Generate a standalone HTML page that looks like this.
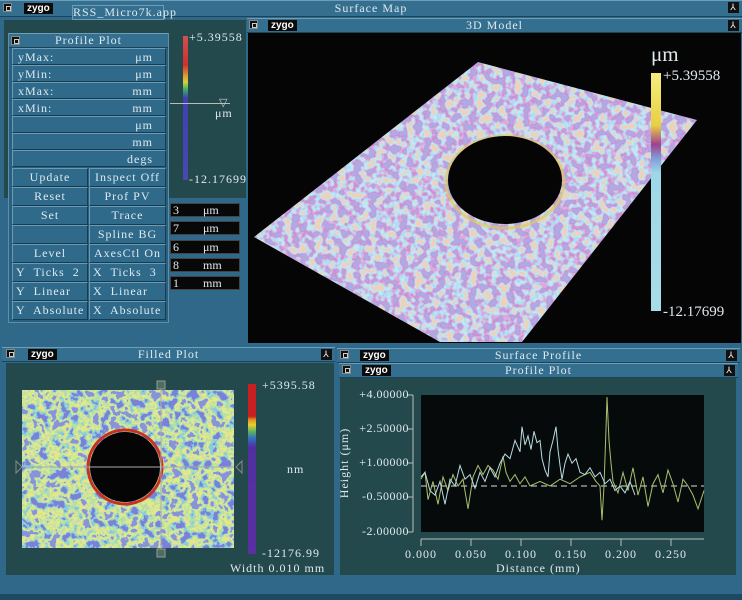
<!DOCTYPE html>
<html><head><meta charset="utf-8"><style>
*{margin:0;padding:0;box-sizing:border-box}
body{width:742px;height:600px;overflow:hidden;background:#2f6888;font-family:"Liberation Serif",serif;color:#dfe9ee;position:relative}
.a{position:absolute}
.tb{position:absolute;background:#346f90;border-top:1px solid #6b9fbb;border-bottom:1px solid #1c4459;font-size:12px;letter-spacing:1px;text-align:center;line-height:13px}
.x{position:absolute;width:9px;height:9px;background:#111;border:1px solid #888;top:2px}
.x:after{content:"";position:absolute;left:2px;top:2px;width:3px;height:3px;border:1px solid #ccc}
.z{position:absolute;background:#0b0b0b;color:#fff;font:bold 10px "Liberation Sans",sans-serif;padding:0 3px;line-height:11px;top:1px}
.pin{position:absolute;right:3px;top:1px;width:11px;height:11px;background:#111;color:#fff;font:9px sans-serif;line-height:11px;text-align:center}
.dk{position:absolute;background:#23494c}
.b{position:absolute;background:#2f6a8a;border-top:1px solid #6a9cb7;border-left:1px solid #6a9cb7;border-bottom:1px solid #173c50;border-right:1px solid #173c50;font-size:12px;letter-spacing:1px;line-height:16px;text-align:center;white-space:nowrap}
.r{text-align:left;padding-left:5px}
.r span{position:absolute;right:12px}
.in{position:absolute;left:170px;width:70px;height:14px;background:#080808;border:1px solid #444;font-size:12px;line-height:12px;padding-left:2px}
.in span{position:absolute;left:32px}
.lbl{position:absolute;font-size:12px;letter-spacing:1px;white-space:nowrap}
.yl{position:absolute;font-size:12px;letter-spacing:0.5px;white-space:nowrap;right:333px;text-align:right}
</style></head><body>
<div class="tb" style="left:0;top:0;width:742px;height:17px;line-height:15px">Surface Map<div class="pin">⅄</div></div>
<div class="x" style="left:3px;top:3px"></div>
<div class="z" style="left:24px;top:3px">zygo</div>
<div class="a" style="left:72px;top:5px;width:92px;height:15px;background:#346f90;border:1px solid #6b9fbb;font-size:12px;letter-spacing:1px;text-align:center;line-height:13px">RSS_Micro7k.app</div>

<div class="dk" style="left:4px;top:20px;width:242px;height:178px"></div>
<div class="a" style="left:8px;top:33px;width:161px;height:290px;background:#2a607e;border:1px solid #5d8fab"></div>
<div class="tb" style="left:9px;top:33px;width:159px;height:15px">Profile Plot</div>
<div class="x" style="left:11px;top:36px"></div>
<div class="b r" style="left:12px;top:48px;width:154px;height:17px">yMax:<span>μm</span></div>
<div class="b r" style="left:12px;top:65px;width:154px;height:17px">yMin:<span>μm</span></div>
<div class="b r" style="left:12px;top:82px;width:154px;height:17px">xMax:<span>mm</span></div>
<div class="b r" style="left:12px;top:99px;width:154px;height:17px">xMin:<span>mm</span></div>
<div class="b r" style="left:12px;top:116px;width:154px;height:17px"><span>μm</span></div>
<div class="b r" style="left:12px;top:133px;width:154px;height:17px"><span>mm</span></div>
<div class="b r" style="left:12px;top:150px;width:154px;height:17px"><span>degs</span></div>
<div class="b" style="left:12px;top:168px;width:76px;height:19px">Update</div><div class="b" style="left:89px;top:168px;width:77px;height:19px">Inspect Off</div>
<div class="b" style="left:12px;top:187px;width:76px;height:19px">Reset</div><div class="b" style="left:89px;top:187px;width:77px;height:19px">Prof PV</div>
<div class="b" style="left:12px;top:206px;width:76px;height:19px">Set</div><div class="b" style="left:89px;top:206px;width:77px;height:19px">Trace</div>
<div class="b" style="left:12px;top:225px;width:76px;height:19px"></div><div class="b" style="left:89px;top:225px;width:77px;height:19px">Spline BG</div>
<div class="b" style="left:12px;top:244px;width:76px;height:19px">Level</div><div class="b" style="left:89px;top:244px;width:77px;height:19px">AxesCtl On</div>
<div class="b" style="left:12px;top:263px;width:76px;height:19px;text-align:left;padding-left:3px">Y&nbsp; Ticks&nbsp; 2</div><div class="b" style="left:89px;top:263px;width:77px;height:19px;text-align:left;padding-left:3px">X&nbsp; Ticks&nbsp; 3</div>
<div class="b" style="left:12px;top:282px;width:76px;height:19px;text-align:left;padding-left:3px">Y&nbsp; Linear</div><div class="b" style="left:89px;top:282px;width:77px;height:19px;text-align:left;padding-left:3px">X&nbsp; Linear</div>
<div class="b" style="left:12px;top:301px;width:76px;height:19px;text-align:left;padding-left:3px">Y&nbsp; Absolute</div><div class="b" style="left:89px;top:301px;width:77px;height:19px;text-align:left;padding-left:3px">X&nbsp; Absolute</div>
<div class="a" style="left:183px;top:36px;width:5px;height:144px;background:linear-gradient(#d05050 0%,#d03030 20%,#e0a030 28%,#d8d040 32%,#40b060 37%,#4040b0 43%,#4848b0 100%)"></div>
<div class="lbl" style="left:189px;top:30px">+5.39558</div>
<div class="lbl" style="left:189px;top:172px">-12.17699</div>
<div class="a" style="left:170px;top:103px;width:60px;height:1px;background:#bbb"></div>
<div class="lbl" style="left:219px;top:96px;font-size:11px;color:#ccc">▽</div>
<div class="lbl" style="left:215px;top:106px">μm</div>
<div class="in" style="top:203px">3<span>μm</span></div>
<div class="in" style="top:221px">7<span>μm</span></div>
<div class="in" style="top:240px">6<span>μm</span></div>
<div class="in" style="top:258px">8<span>mm</span></div>
<div class="in" style="top:276px">1<span>mm</span></div>

<div class="tb" style="left:247px;top:18px;width:495px;height:15px">3D Model<div class="pin">⅄</div></div>
<div class="x" style="left:249px;top:20px"></div>
<div class="z" style="left:268px;top:20px">zygo</div>
<div class="a" style="left:248px;top:33px;width:493px;height:310px;background:#050505"></div>
<svg class="a" style="left:0;top:0" width="742" height="343">
<defs>
<filter id="n3" x="0" y="0" width="1" height="1"><feTurbulence type="fractalNoise" baseFrequency="0.13" numOctaves="2" seed="3"/><feColorMatrix type="matrix" values="1 0 0 0 0 1 0 0 0 0 1 0 0 0 0 0 0 0 0 1"/><feComponentTransfer><feFuncR type="linear" slope="2.4" intercept="-0.7"/><feFuncG type="linear" slope="2.4" intercept="-0.7"/><feFuncB type="linear" slope="2.4" intercept="-0.7"/></feComponentTransfer><feComponentTransfer><feFuncR type="discrete" tableValues="0.42 0.55 0.72 0.45 0.55 0.85"/><feFuncG type="discrete" tableValues="0.4 0.3 0.4 0.72 0.8 0.65"/><feFuncB type="discrete" tableValues="0.78 0.68 0.7 0.9 0.9 0.5"/></feComponentTransfer></filter>
<clipPath id="c3"><polygon points="254,237 478,62 697,120 522,342 440,342"/></clipPath>
</defs>
<g clip-path="url(#c3)"><rect x="250" y="60" width="450" height="285" filter="url(#n3)"/></g>
<ellipse cx="505" cy="182" rx="59" ry="46" fill="none" stroke="#e0c860" stroke-width="3" opacity="0.7"/>
<ellipse cx="505" cy="180" rx="57" ry="44" fill="#050505"/>
</svg>
<div class="a" style="left:651px;top:73px;width:10px;height:238px;background:linear-gradient(#f4ee80 0%,#e8d040 22%,#a04090 30%,#80a0d8 36%,#9ed8e8 42%,#a8dce8 100%)"></div>
<div class="lbl" style="left:651px;top:42px;font-size:21px;letter-spacing:0">μm</div>
<div class="lbl" style="left:663px;top:68px;font-size:15px;letter-spacing:0">+5.39558</div>
<div class="lbl" style="left:663px;top:304px;font-size:15px;letter-spacing:0">-12.17699</div>

<div class="a" style="left:0;top:343px;width:742px;height:257px;background:#2f6888"></div>
<div class="tb" style="left:2px;top:347px;width:333px;height:15px">Filled Plot<div class="pin">⅄</div></div>
<div class="x" style="left:6px;top:349px"></div>
<div class="z" style="left:28px;top:349px">zygo</div>
<div class="dk" style="left:6px;top:363px;width:328px;height:212px"></div>
<svg class="a" style="left:0;top:340px" width="335" height="240">
<filter id="n2b" x="0" y="0" width="1" height="1"><feTurbulence type="fractalNoise" baseFrequency="0.1" numOctaves="3" seed="7"/><feColorMatrix type="matrix" values="1 0 0 0 0 1 0 0 0 0 1 0 0 0 0 0 0 0 0 1"/><feComponentTransfer><feFuncR type="linear" slope="2.4" intercept="-0.7"/><feFuncG type="linear" slope="2.4" intercept="-0.7"/><feFuncB type="linear" slope="2.4" intercept="-0.7"/></feComponentTransfer><feComponentTransfer><feFuncR type="discrete" tableValues="0.2 0.25 0.45 0.8 0.55 0.25"/><feFuncG type="discrete" tableValues="0.22 0.6 0.75 0.8 0.75 0.3"/><feFuncB type="discrete" tableValues="0.68 0.75 0.4 0.25 0.4 0.7"/></feComponentTransfer></filter>
<rect x="22" y="50" width="212" height="158" filter="url(#n2b)"/>
<circle cx="125" cy="127" r="37" fill="none" stroke="#c83020" stroke-width="3"/>
<circle cx="125" cy="127" r="35" fill="#050505"/>
<line x1="22" y1="127" x2="234" y2="127" stroke="#aaa"/>
<line x1="161" y1="44" x2="161" y2="213" stroke="#aaa"/>
<rect x="157" y="41" width="8" height="8" fill="#4a6e60" stroke="#999"/>
<rect x="157" y="209" width="8" height="8" fill="#4a6e60" stroke="#999"/>
<polygon points="16,121 22,127 16,133" fill="none" stroke="#888"/>
<polygon points="242,121 236,127 242,133" fill="none" stroke="#888"/>
</svg>
<div class="a" style="left:248px;top:384px;width:8px;height:170px;background:linear-gradient(#c82020 0%,#c82020 19%,#e09020 21%,#e8d030 24%,#60b060 28%,#3070c0 32%,#5030a0 37%,#5a2fa0 100%)"></div>
<div class="lbl" style="left:262px;top:378px">+5395.58</div>
<div class="lbl" style="left:287px;top:462px">nm</div>
<div class="lbl" style="left:262px;top:546px">-12176.99</div>
<div class="lbl" style="left:230px;top:561px">Width 0.010 mm</div>

<div class="tb" style="left:337px;top:348px;width:403px;height:15px">Surface Profile<div class="pin">⅄</div></div>
<div class="x" style="left:340px;top:350px"></div>
<div class="z" style="left:360px;top:350px">zygo</div>
<div class="tb" style="left:339px;top:363px;width:399px;height:15px">Profile Plot<div class="pin">⅄</div></div>
<div class="x" style="left:342px;top:365px"></div>
<div class="z" style="left:362px;top:365px">zygo</div>
<div class="dk" style="left:340px;top:378px;width:396px;height:197px"></div>
<svg class="a" style="left:0;top:0" width="742" height="600">
<rect x="421" y="395" width="283" height="137" fill="#060a0a"/>
<line x1="421" y1="486" x2="704" y2="486" stroke="#ddd" stroke-dasharray="6,4"/>
<g transform="translate(0,486) scale(1,-22.8)" fill="none">
<polyline vector-effect="non-scaling-stroke" stroke="#a8c070" points="421,0.3 425,0.6 428,-0.6 433,0.2 438,-0.8 443,0.4 448,-0.2 453,0.5 458,0.0 463,0.3 468,-1.0 473,0.4 478,0.9 483,0.5 488,0.9 493,0.7 498,0.3 503,1.3 506,0.6 510,0.2 515,0.5 520,0.1 525,0.4 530,0 540,0.2 550,0 560,0.3 570,0.1 580,0.4 590,0.6 596,0.2 600,0.0 602,-1.5 604,0 606,2.5 607,3.9 609,2.0 611,1.0 613,0.2 618,-0.3 623,0.6 628,-0.2 633,0.8 638,-0.4 643,0.4 648,-0.9 653,0.1 658,0.5 663,-0.3 668,0.7 673,0.1 678,-0.7 683,0.3 688,0.0 693,-0.4 698,-1.0 704,-0.2"/>
<polyline vector-effect="non-scaling-stroke" stroke="#b8dce4" points="421,0.4 425,0.6 430,-0.2 435,-0.4 440,0.2 445,-0.8 450,0.3 455,0.0 460,0.9 465,0.3 470,0.5 475,-0.1 480,0.6 485,0.2 490,0.8 495,0.4 500,1.0 505,1.4 510,1.2 515,2.0 520,1.5 522,2.6 525,1.8 528,2.2 531,1.6 534,2.4 537,1.9 540,2.0 542,1.2 545,0.7 548,0.4 550,1.5 553,2.0 556,2.6 558,1.6 560,0.9 562,0.3 565,1.0 568,1.4 572,1.0 576,1.2 580,0.6 585,0.5 590,0.8 595,0.4 600,0.6 605,0.1 610,0.3 615,-0.2 620,0.0 625,-0.3 630,0.2 635,-0.4"/>
</g>
<line x1="413" y1="395" x2="413" y2="532" stroke="#bbb"/>
<g stroke="#bbb"><line x1="407" y1="395" x2="413" y2="395"/><line x1="407" y1="429" x2="413" y2="429"/><line x1="407" y1="463" x2="413" y2="463"/><line x1="407" y1="497" x2="413" y2="497"/><line x1="407" y1="532" x2="413" y2="532"/>
<line x1="421" y1="539" x2="704" y2="539"/>
<line x1="421" y1="539" x2="421" y2="546"/><line x1="471" y1="539" x2="471" y2="546"/><line x1="521" y1="539" x2="521" y2="546"/><line x1="571" y1="539" x2="571" y2="546"/><line x1="621" y1="539" x2="621" y2="546"/><line x1="671" y1="539" x2="671" y2="546"/></g>
<text x="348" y="463" transform="rotate(-90 348 463)" font-family="Liberation Serif" font-size="12" fill="#dfe9ee" letter-spacing="1" text-anchor="middle">Height (μm)</text>
</svg>
<div class="yl" style="top:387px">+4.00000</div>
<div class="yl" style="top:421px">+2.50000</div>
<div class="yl" style="top:455px">+1.00000</div>
<div class="yl" style="top:489px">-0.50000</div>
<div class="yl" style="top:524px">-2.00000</div>
<div class="lbl" style="left:405px;top:547px">0.000</div>
<div class="lbl" style="left:455px;top:547px">0.050</div>
<div class="lbl" style="left:505px;top:547px">0.100</div>
<div class="lbl" style="left:555px;top:547px">0.150</div>
<div class="lbl" style="left:605px;top:547px">0.200</div>
<div class="lbl" style="left:655px;top:547px">0.250</div>
<div class="lbl" style="left:496px;top:561px">Distance (mm)</div>
<div class="a" style="left:0;top:594px;width:742px;height:6px;background:#1d4a62"></div>
</body></html>
